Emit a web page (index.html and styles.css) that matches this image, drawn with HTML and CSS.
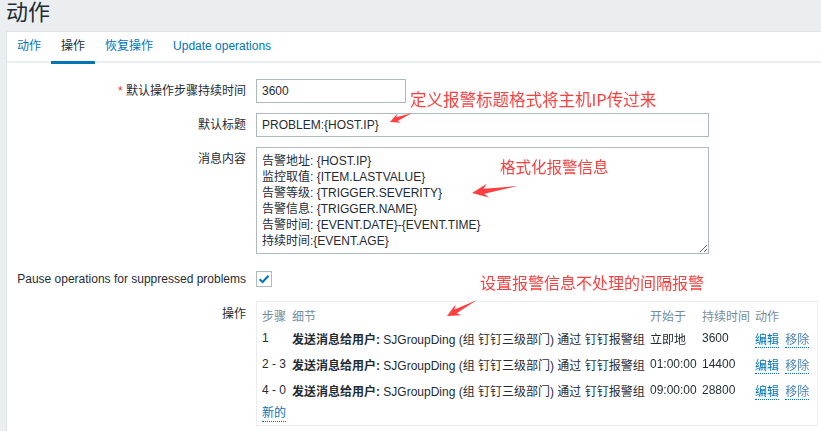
FILE: index.html
```html
<!DOCTYPE html>
<html lang="zh">
<head>
    <meta charset="UTF-8">
    <meta name="viewport" content="width=device-width, initial-scale=1.0">
    <title>动作</title>
    <link rel="stylesheet" href="styles.css">
</head>
<body>
    <header class="page-head">
        <h1>动作</h1>
    </header>
    <div class="container">
        <ul class="tabs">
            <li><a href="#">动作</a></li>
            <li class="active"><a href="#">操作</a></li>
            <li><a href="#">恢复操作</a></li>
            <li><a href="#">Update operations</a></li>
        </ul>
        <form class="form">
            <label class="form-label"><span class="req">*</span> 默认操作步骤持续时间</label>
            <div class="form-field"><input type="text" class="input-short" value="3600"></div>

            <label class="form-label">默认标题</label>
            <div class="form-field"><input type="text" class="input-wide" value="PROBLEM:{HOST.IP}"></div>

            <label class="form-label">消息内容</label>
            <div class="form-field">
                <textarea class="input-wide msg">告警地址: {HOST.IP}
监控取值: {ITEM.LASTVALUE}
告警等级: {TRIGGER.SEVERITY}
告警信息: {TRIGGER.NAME}
告警时间: {EVENT.DATE}-{EVENT.TIME}
持续时间:{EVENT.AGE}</textarea>
            </div>

            <label class="form-label check-row">Pause operations for suppressed problems</label>
            <div class="form-field check-row">
                <span class="checkbox">
                    <svg width="12" height="10" viewBox="0 0 12 10"><path d="M1.5 5.2 L4.6 8 L10.5 1.8" fill="none" stroke="#0275b8" stroke-width="2"/></svg>
                </span>
            </div>

            <label class="form-label ops-label">操作</label>
            <div class="form-field">
                <div class="op-box">
                    <table class="op-table">
                        <colgroup>
                            <col style="width: 30px">
                            <col style="width: 358px">
                            <col style="width: 52px">
                            <col style="width: 53px">
                            <col>
                        </colgroup>
                        <thead>
                            <tr><th>步骤</th><th>细节</th><th>开始于</th><th>持续时间</th><th>动作</th></tr>
                        </thead>
                        <tbody>
                            <tr>
                                <td>1</td>
                                <td><b>发送消息给用户:</b> SJGroupDing (组 钉钉三级部门) 通过 钉钉报警组</td>
                                <td>立即地</td>
                                <td>3600</td>
                                <td><a class="link" href="#">编辑</a> <a class="link remove" href="#">移除</a></td>
                            </tr>
                            <tr>
                                <td>2 - 3</td>
                                <td><b>发送消息给用户:</b> SJGroupDing (组 钉钉三级部门) 通过 钉钉报警组</td>
                                <td>01:00:00</td>
                                <td>14400</td>
                                <td><a class="link" href="#">编辑</a> <a class="link remove" href="#">移除</a></td>
                            </tr>
                            <tr>
                                <td>4 - 0</td>
                                <td><b>发送消息给用户:</b> SJGroupDing (组 钉钉三级部门) 通过 钉钉报警组</td>
                                <td>09:00:00</td>
                                <td>28800</td>
                                <td><a class="link" href="#">编辑</a> <a class="link remove" href="#">移除</a></td>
                            </tr>
                        </tbody>
                    </table>
                    <a class="link new-link" href="#">新的</a>
                </div>
            </div>
        </form>
    </div>

    <!-- 截图标注 -->
    <div class="notes">
        <span class="note note-title">定义报警标题格式将主机IP传过来</span>
        <span class="note note-msg">格式化报警信息</span>
        <span class="note note-ops">设置报警信息不处理的间隔报警</span>
        <svg class="arrows" width="821" height="431" viewBox="0 0 821 431">
            <polygon points="390,122 397.4,113.6 396.2,117.3 412,113 397.7,121 401.1,122.8"/>
            <polygon points="472,193 486.8,183.7 483.5,188.7 518,186 484.3,193.7 488.9,197.5"/>
            <polygon points="447,316 455.6,304.6 454.6,309.5 477,300 456.6,313.3 461.3,315.2"/>
        </svg>
    </div>
</body>
</html>
```

FILE: styles.css
```css
body {
    margin: 0;
    font-family: "Liberation Sans", Arial, "Noto Sans CJK SC", sans-serif;
    font-size: 12px;
    color: #1f2c33;
    background-color: #ebeef0;
    width: 821px;
    height: 431px;
    overflow: hidden;
    position: relative;
}
.page-head {
    height: 31px;
    padding-left: 6px;
}
.page-head h1 {
    margin: 0;
    font-size: 22px;
    font-weight: normal;
    line-height: 26px;
    color: #1f2c33;
}
.container {
    margin-left: 6px;
    background: #fff;
    border-top: 1px solid #dfe4e7;
    border-left: 1px solid #dfe4e7;
    height: 400px;
}
.tabs {
    list-style: none;
    margin: 0;
    padding: 0;
    display: flex;
    border-bottom: 2px solid #ebeef0;
    height: 29px;
}
.tabs li a {
    display: block;
    padding: 0 10px;
    line-height: 29px;
    color: #0275b8;
    text-decoration: none;
    border-bottom: 3px solid transparent;
}
.tabs li.active a {
    color: #1f2c33;
    border-bottom-color: #0275b8;
}
.form {
    display: grid;
    grid-template-columns: 239px 1fr;
    column-gap: 10px;
    row-gap: 10px;
    padding-top: 16px;
}
.form-label {
    text-align: right;
    line-height: 24px;
}
.req {
    color: #e33734;
}
input, textarea {
    font-family: "Liberation Sans", Arial, "Noto Sans CJK SC", sans-serif;
    font-size: 12px;
    color: #1f2c33;
    border: 1px solid #acbbc2;
    border-radius: 0;
    box-sizing: border-box;
    padding: 0 5px;
    margin: 0;
    display: block;
}
input {
    height: 24px;
}
.input-short {
    width: 150px;
}
.input-wide {
    width: 453px;
}
.msg {
    height: 107px;
    padding: 5px 5px;
    line-height: 16px;
    resize: vertical;
}
.check-row {
    padding-top: 3px;
}
.checkbox {
    display: flex;
    align-items: center;
    justify-content: center;
    width: 16px;
    height: 16px;
    box-sizing: border-box;
    border: 1px solid #acbbc2;
    margin-top: 4px;
}
.ops-label {
    padding-top: 1px;
}
.op-box {
    width: 562px;
    box-sizing: border-box;
    border: 1px solid #ebeef0;
    padding: 3px 5px 3px;
}
.op-table {
    width: 100%;
    table-layout: fixed;
    border-collapse: collapse;
}
.op-table th {
    text-align: left;
    font-weight: normal;
    color: #768d99;
    height: 20px;
    padding: 0;
}
.op-table td {
    height: 26px;
    padding: 0;
    white-space: nowrap;
    overflow: hidden;
}
.link {
    color: #0275b8;
    text-decoration: none;
    border-bottom: 1px dotted #0275b8;
}
.link.remove {
    color: #4a82b8;
    margin-left: 3px;
}
.new-link {
    display: inline-block;
    line-height: 15px;
    margin-top: 3px;
}
.notes {
    position: absolute;
    left: 0;
    top: 0;
    width: 821px;
    height: 431px;
    pointer-events: none;
}
.note {
    position: absolute;
    color: #ff3f3f;
    white-space: nowrap;
    font-family: "Noto Sans CJK SC", sans-serif;
}
.note-title {
    left: 410px;
    top: 87px;
    font-size: 16.5px;
}
.note-msg {
    left: 500px;
    top: 155px;
    font-size: 15.5px;
}
.note-ops {
    left: 480px;
    top: 270px;
    font-size: 16px;
}
.arrows {
    position: absolute;
    left: 0;
    top: 0;
}
.arrows polygon {
    fill: #ff3f3f;
}
```
